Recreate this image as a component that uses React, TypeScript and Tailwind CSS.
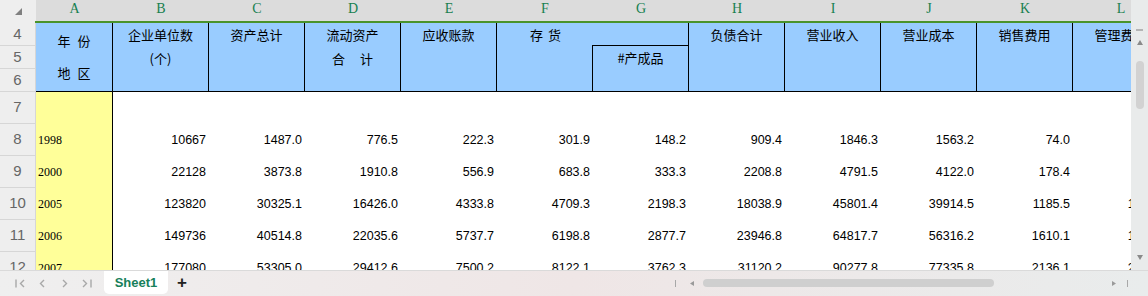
import React from "react";

const letters = ["A", "B", "C", "D", "E", "F", "G", "H", "I", "J", "K", "L"];

const rows = [
  { n: "8", year: "1998", vals: ["10667", "1487.0", "776.5", "222.3", "301.9", "148.2", "909.4", "1846.3", "1563.2", "74.0", "143.7"] },
  { n: "9", year: "2000", vals: ["22128", "3873.8", "1910.8", "556.9", "683.8", "333.3", "2208.8", "4791.5", "4122.0", "178.4", "366.2"] },
  { n: "10", year: "2005", vals: ["123820", "30325.1", "16426.0", "4333.8", "4709.3", "2198.3", "18038.9", "45801.4", "39914.5", "1185.5", "1625.8"] },
  { n: "11", year: "2006", vals: ["149736", "40514.8", "22035.6", "5737.7", "6198.8", "2877.7", "23946.8", "64817.7", "56316.2", "1610.1", "1979.5"] },
  { n: "12", year: "2007", vals: ["177080", "53305.0", "29412.6", "7500.2", "8122.1", "3762.3", "31120.2", "90277.8", "77335.8", "2136.1", "2434.1"] },
];

const cjk = "font-['Noto_Sans_CJK_SC',sans-serif] text-[13px] text-black";

function RowNum({ n, h }: { n: string; h: string }) {
  return (
    <div className={`${h} w-[36px] shrink-0 flex items-center justify-center bg-[#eeeeee] border-r border-b border-[#d6d6d6] font-['Liberation_Sans',sans-serif] text-[15px] text-[#666666]`}>
      {n}
    </div>
  );
}

// single-line header cell (B..L except special ones)
function HeadCell({ line1, line2 }: { line1: React.ReactNode; line2?: React.ReactNode }) {
  return (
    <div className={`w-[96px] shrink-0 h-full bg-[#99ccff] border-r border-b border-black flex flex-col items-center ${cjk}`}>
      <div className="h-[23px] leading-[23px] whitespace-nowrap">{line1}</div>
      {line2 && <div className="h-[25px] leading-[25px] whitespace-nowrap">{line2}</div>}
    </div>
  );
}

function Chevron({ dir }: { dir: "l" | "r" }) {
  return (
    <svg width="6" height="9" viewBox="0 0 6 9" className="shrink-0">
      <path d={dir === "l" ? "M5 1 L1.5 4.5 L5 8" : "M1 1 L4.5 4.5 L1 8"} fill="none" stroke="#a8a8a8" strokeWidth="1.4" />
    </svg>
  );
}

export default function App() {
  return (
    <div className="w-[1148px] h-[296px] overflow-hidden bg-white flex flex-col select-none">
      {/* sheet + vertical scrollbar */}
      <div className="h-[270px] flex">
        <div className="w-[1131px] overflow-hidden flex flex-col">
          {/* column letters */}
          <div className="h-[21px] flex shrink-0 bg-[#dcdcdc]">
            <div className="w-[36px] shrink-0 bg-[#eeeeee] flex items-center justify-center">
              <svg width="8" height="8" viewBox="0 0 8 8" className="mt-[3px] ml-[1px]">
                <path d="M7 0 L7 7 L0 7 Z" fill="#808080" />
              </svg>
            </div>
            {letters.map((l) => (
              <div
                key={l}
                className={`${l === "A" ? "w-[77px]" : "w-[96px]"} shrink-0 flex items-end justify-center pb-[2px] font-['Liberation_Serif',serif] text-[14px] text-[#178050]`}
              >
                {l}
              </div>
            ))}
          </div>
          {/* green line */}
          <div className="h-[2px] flex shrink-0">
            <div className="w-[35px] shrink-0 bg-[#eeeeee]" />
            <div className="flex-1 bg-[#4a932b]" />
          </div>

          {/* header block rows 4-6 */}
          <div className="h-[69px] flex shrink-0">
            <div className="w-[36px] shrink-0 flex flex-col">
              <RowNum n="4" h="h-[23px]" />
              <RowNum n="5" h="h-[23px]" />
              <RowNum n="6" h="h-[23px]" />
            </div>
            <div className={`w-[77px] shrink-0 bg-[#99ccff] border-r border-b border-black flex flex-col items-center pt-[2px] ${cjk}`}>
              <div className="h-[32px] leading-[32px] flex gap-[7px]">
                <span>年</span>
                <span>份</span>
              </div>
              <div className="h-[32px] leading-[32px] flex gap-[7px]">
                <span>地</span>
                <span>区</span>
              </div>
            </div>
            <HeadCell line1="企业单位数" line2="(个)" />
            <HeadCell line1="资产总计" />
            <HeadCell
              line1="流动资产"
              line2={
                <span className="flex gap-[15px]">
                  <span>合</span>
                  <span>计</span>
                </span>
              }
            />
            <HeadCell line1="应收账款" />
            {/* F: 存 货 (no right border, merged with G top) */}
            <div className={`w-[96px] shrink-0 h-full bg-[#99ccff] border-b border-black flex flex-col items-center ${cjk}`}>
              <div className="h-[23px] leading-[23px] flex gap-[5px] pl-[1px]">
                <span>存</span>
                <span>货</span>
              </div>
              <div className="flex-1 w-full" />
            </div>
            {/* G: #产成品 */}
            <div className={`w-[96px] shrink-0 h-full bg-[#99ccff] border-r border-b border-black flex flex-col ${cjk}`}>
              <div className="h-[22px] shrink-0" />
              <div className="flex-1 border-t border-l border-black -ml-px flex flex-col items-center">
                <div className="h-[23px] leading-[23px]">#产成品</div>
              </div>
            </div>
            <HeadCell line1="负债合计" />
            <HeadCell line1="营业收入" />
            <HeadCell line1="营业成本" />
            <HeadCell line1="销售费用" />
            <HeadCell line1="管理费用" />
          </div>

          {/* row 7 (blank) */}
          <div className="h-[32px] flex shrink-0">
            <RowNum n="7" h="h-[32px]" />
            <div className="w-[77px] shrink-0 bg-[#ffff99] border-r border-black" />
          </div>

          {/* data rows */}
          {rows.map((r) => (
            <div key={r.n} className="h-[32px] flex shrink-0">
              <RowNum n={r.n} h="h-[32px]" />
              <div className="w-[77px] shrink-0 bg-[#ffff99] border-r border-black flex items-center pl-[2px] font-['Liberation_Serif',serif] text-[12px] text-black">
                {r.year}
              </div>
              {r.vals.map((v, i) => (
                <div
                  key={i}
                  className="w-[96px] shrink-0 flex items-center justify-end pr-[3px] font-['Liberation_Sans',sans-serif] text-[12.5px] text-black"
                >
                  {v}
                </div>
              ))}
            </div>
          ))}
        </div>

        {/* vertical scrollbar */}
        <div className="w-[17px] shrink-0 bg-[#e9ebeb] flex flex-col items-center">
          <div className="mt-[29px] w-[7px] h-[2px] bg-[#b4b4b4]" />
          <svg width="6" height="5" viewBox="0 0 6 5" className="mt-[9px]">
            <path d="M3 0 L6 5 L0 5 Z" fill="#8a8a8a" />
          </svg>
          <div className="mt-[16px] w-[8px] h-[48px] rounded-full bg-[#d2d2d2]" />
          <div className="flex-1" />
          <svg width="6" height="5" viewBox="0 0 6 5" className="mb-[10px]">
            <path d="M0 0 L6 0 L3 5 Z" fill="#8a8a8a" />
          </svg>
        </div>
      </div>

      {/* tab bar */}
      <div className="h-[26px] flex items-start border-t border-[#dadada] bg-gradient-to-r from-[#efefef] via-[#efe6e6] to-[#e9ecec]">
        <div className="h-full flex items-center pl-[15px] gap-[14px] pb-[1px]">
          <svg width="10" height="9" viewBox="0 0 10 9">
            <path d="M1 0.5 L1 8.5" stroke="#a8a8a8" strokeWidth="1.4" />
            <path d="M9 1 L5.5 4.5 L9 8" fill="none" stroke="#a8a8a8" strokeWidth="1.4" />
          </svg>
          <Chevron dir="l" />
          <span className="ml-[3px]">
            <Chevron dir="r" />
          </span>
          <svg width="10" height="9" viewBox="0 0 10 9">
            <path d="M1 1 L4.5 4.5 L1 8" fill="none" stroke="#a8a8a8" strokeWidth="1.4" />
            <path d="M9 0.5 L9 8.5" stroke="#a8a8a8" strokeWidth="1.4" />
          </svg>
        </div>
        <div className="ml-[12px] w-[64px] h-[23px] bg-white rounded-b-[5px] flex items-center justify-center font-['Liberation_Sans',sans-serif] text-[13px] font-bold text-[#17805a]">
          Sheet1
        </div>
        <div className="ml-[9px] h-full flex items-center pb-[2px] font-['Liberation_Sans',sans-serif] text-[17px] font-bold text-[#222222] leading-none">
          +
        </div>
        <div className="ml-[488px] h-full flex items-center gap-[11px] pb-[1px]">
          <div className="w-px h-[7px] bg-[#a8a8a8]" />
          <svg width="4" height="5" viewBox="0 0 4 5" className="ml-[3px]">
            <path d="M4 0 L4 5 L0 2.5 Z" fill="#9a9a9a" />
          </svg>
          <div className="ml-[-2px] w-[291px] h-[8px] rounded-full bg-[#cfcfcf]" />
          <svg width="4" height="5" viewBox="0 0 4 5" className="ml-[107px]">
            <path d="M0 0 L0 5 L4 2.5 Z" fill="#9a9a9a" />
          </svg>
          <div className="w-px h-[7px] bg-[#a8a8a8]" />
        </div>
      </div>
    </div>
  );
}
